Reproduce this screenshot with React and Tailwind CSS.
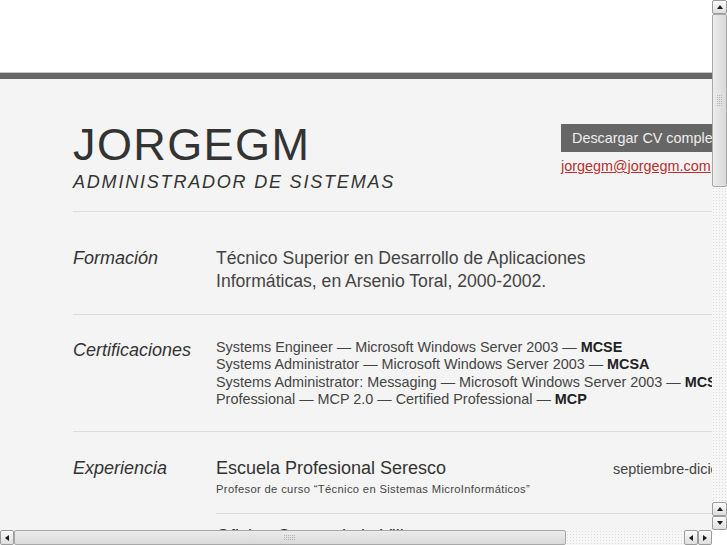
import React from "react";

function Arrow({ dir }) {
  const pts = {
    up: "0,5 3,1 6,5",
    down: "0,1 3,5 6,1",
    left: "5,0 1,3 5,6",
    right: "1,0 5,3 1,6",
  }[dir];
  return (
    <svg width="6" height="6" viewBox="0 0 6 6">
      <polygon points={pts} fill="#1a1a1a" />
    </svg>
  );
}

function Grip({ vertical }) {
  const dots = [];
  const cols = vertical ? 3 : 6;
  const rows = vertical ? 6 : 3;
  for (let r = 0; r < rows; r++)
    for (let c = 0; c < cols; c++)
      dots.push(<rect key={r + "-" + c} x={c * 2} y={r * 2} width="1" height="1" fill="#b4b4b4" />);
  return (
    <svg width={cols * 2} height={rows * 2}>
      {dots}
    </svg>
  );
}

export default function App() {
  return (
    <div className="relative h-[545px] w-[727px] overflow-hidden bg-[#f4f4f4] font-['Liberation_Sans',Arial,sans-serif] text-[#444]">
      <div className="w-[900px]">
        <div className="h-[72px] bg-white" />
        <div className="h-[7px] border-t border-[#c8c8c8] bg-[#666]" />
        <div className="ml-[73px] w-[780px]">
          <header className="flex border-b border-[#dcdcdc] pt-[43px] pb-[20px]">
            <div className="w-[488px] shrink-0">
              <h1 className="text-[45px] leading-none tracking-[1.4px] text-[#333]">JORGEGM</h1>
              <p className="mt-[6px] text-[18px] leading-none italic tracking-[1.8px] text-[#333]">
                ADMINISTRADOR DE SISTEMAS
              </p>
            </div>
            <div className="mt-[2px] flex flex-col items-start">
              <a className="block h-[28px] whitespace-nowrap bg-[#666] px-[11px] text-[14.4px] leading-[28px] text-[#eee]">
                Descargar CV completo
              </a>
              <a className="mt-[6px] whitespace-nowrap text-[14.4px] leading-[17.28px] text-[#b8302f] underline">
                jorgegm@jorgegm.com
              </a>
            </div>
          </header>

          <section className="flex border-b border-[#dcdcdc] pt-[35px] pb-[22px]">
            <h2 className="w-[143px] shrink-0 text-[18px] leading-[22px] italic text-[#333]">Formación</h2>
            <div className="w-[420px] text-[17.6px] leading-[22.5px]">
              Técnico Superior en Desarrollo de Aplicaciones Informáticas, en Arsenio Toral, 2000-2002.
            </div>
          </section>

          <section className="flex border-b border-[#dcdcdc] pt-[24px] pb-[23px]">
            <h2 className="w-[143px] shrink-0 text-[18px] leading-[22px] italic text-[#333]">Certificaciones</h2>
            <div className="whitespace-nowrap text-[14.4px] leading-[17.28px]">
              <div>
                Systems Engineer — Microsoft Windows Server 2003 — <b className="text-[#222]">MCSE</b>
              </div>
              <div>
                Systems Administrator — Microsoft Windows Server 2003 — <b className="text-[#222]">MCSA</b>
              </div>
              <div>
                Systems Administrator: Messaging — Microsoft Windows Server 2003 —{" "}
                <b className="text-[#222]">MCSA: Messaging</b>
              </div>
              <div>
                Professional — MCP 2.0 — Certified Professional — <b className="text-[#222]">MCP</b>
              </div>
            </div>
          </section>

          <section className="flex pt-[25px]">
            <h2 className="w-[143px] shrink-0 text-[18px] leading-[22px] italic text-[#333]">Experiencia</h2>
            <div className="flex-1">
              <div className="border-b border-[#dcdcdc] pb-[16px]">
                <div className="flex items-baseline">
                  <h3 className="w-[397px] shrink-0 text-[18px] leading-[22px] text-[#333]">
                    Escuela Profesional Seresco
                  </h3>
                  <span className="whitespace-nowrap text-[14.4px] leading-[22px]">septiembre-diciembre 2008</span>
                </div>
                <p className="mt-[1px] text-[11.2px] leading-[16px] tracking-[0.35px]">
                  Profesor de curso “Técnico en Sistemas MicroInformáticos”
                </p>
              </div>
              <div className="pt-[11px]">
                <div className="flex items-baseline">
                  <h3 className="w-[397px] shrink-0 text-[18px] leading-[22px] text-[#333]">
                    Oficina Centro de la Villa
                  </h3>
                  <span className="whitespace-nowrap text-[14.4px] leading-[22px]">2007</span>
                </div>
              </div>
            </div>
          </section>
        </div>
      </div>

      {/* vertical scrollbar */}
      <div className="absolute left-[712px] top-0 flex h-[530px] w-[15px] flex-col bg-[#f4f4f4]">
        <div className="flex h-[14px] w-[15px] items-center justify-center rounded-[2px] border border-[#9c9c9c] bg-linear-to-b from-[#fbfbfb] to-[#dedede]">
          <Arrow dir="up" />
        </div>
        <div className="flex h-[173px] w-[15px] items-center justify-center rounded-[2px] border border-[#a8a8a8] bg-linear-to-r from-[#ececec] to-[#d9d9d9]">
          <Grip vertical />
        </div>
        <div className="flex-1 bg-[#f7f7f7] bg-[radial-gradient(circle,#dcdcdc_0.6px,transparent_0.8px)] bg-[length:3px_3px]" />
        <div className="flex h-[14px] w-[15px] items-center justify-center rounded-[2px] border border-[#9c9c9c] bg-linear-to-b from-[#fbfbfb] to-[#dedede]">
          <Arrow dir="up" />
        </div>
        <div className="flex h-[14px] w-[15px] items-center justify-center rounded-[2px] border border-[#9c9c9c] bg-linear-to-b from-[#fbfbfb] to-[#dedede]">
          <Arrow dir="down" />
        </div>
      </div>

      {/* horizontal scrollbar */}
      <div className="absolute left-0 top-[530px] flex h-[15px] w-[712px] flex-row bg-[#f4f4f4]">
        <div className="flex h-[15px] w-[14px] items-center justify-center rounded-[2px] border border-[#9c9c9c] bg-linear-to-b from-[#fbfbfb] to-[#dedede]">
          <Arrow dir="left" />
        </div>
        <div className="flex h-[15px] w-[552px] items-center justify-center rounded-[2px] border border-[#a8a8a8] bg-linear-to-b from-[#ececec] to-[#d9d9d9]">
          <Grip />
        </div>
        <div className="flex-1 bg-[#f7f7f7] bg-[radial-gradient(circle,#dcdcdc_0.6px,transparent_0.8px)] bg-[length:3px_3px]" />
        <div className="flex h-[15px] w-[14px] items-center justify-center rounded-[2px] border border-[#9c9c9c] bg-linear-to-b from-[#fbfbfb] to-[#dedede]">
          <Arrow dir="left" />
        </div>
        <div className="flex h-[15px] w-[14px] items-center justify-center rounded-[2px] border border-[#9c9c9c] bg-linear-to-b from-[#fbfbfb] to-[#dedede]">
          <Arrow dir="right" />
        </div>
      </div>
      <div className="absolute left-[712px] top-[530px] h-[15px] w-[15px] bg-white" />
    </div>
  );
}
